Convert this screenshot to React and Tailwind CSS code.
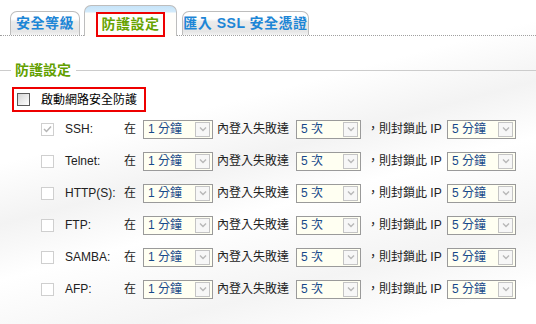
import React from "react";

const font = "font-['Liberation_Sans','Noto_Sans_CJK_TC',sans-serif]";

const services = [
  { name: "SSH:", checked: true },
  { name: "Telnet:" },
  { name: "HTTP(S):" },
  { name: "FTP:" },
  { name: "SAMBA:" },
  { name: "AFP:" },
];

const Chevron = () => (
  <svg width="8" height="6" viewBox="0 0 8 6">
    <path d="M1 1.5 L4 4.5 L7 1.5" fill="none" stroke="#b8b8b8" strokeWidth="1.4" />
  </svg>
);

const Select = ({ value, width }) => (
  <div
    className={`relative h-[19px] border border-[#9a9a9a] bg-[#fffff2] flex items-center pl-[4px] ${width}`}
  >
    <span className="text-[12px] leading-none text-[#17498a]">{value}</span>
    <div className="absolute right-[2px] top-[1px] w-[15px] h-[15px] border border-[#c4c4c4] bg-[#f7f7f7] flex items-center justify-center">
      <Chevron />
    </div>
  </div>
);

const SmallCheck = ({ checked }) => (
  <div className="w-[13px] h-[13px] border border-[#cfcfcf] bg-white flex items-center justify-center">
    {checked && (
      <svg width="9" height="8" viewBox="0 0 9 8">
        <path d="M1 4 L3.5 6.5 L8 1.5" fill="none" stroke="#b5b5b5" strokeWidth="1.5" />
      </svg>
    )}
  </div>
);

const Tab = ({ label, width }) => (
  <div
    className={`h-[24px] ${width} rounded-t-[7px] border border-b-0 border-[#bdbdbd] bg-[linear-gradient(#ffffff_0%,#ffffff_30%,#ebebeb_42%,#e6e6e6_85%,#f2f2f2_100%)] flex items-center justify-center`}
  >
    <span className="text-[14px] font-bold text-[#1d86d6] tracking-[0.5px]">{label}</span>
  </div>
);

const App = () => {
  return (
    <div
      className={`w-[536px] h-[324px] overflow-hidden bg-[linear-gradient(165deg,#ffffff_0%,#ffffff_35%,#f3f3f3_48%,#ffffff_60%,#f4f4f4_78%,#ffffff_92%)] ${font}`}
    >
      {/* tabs */}
      <div className="h-[36px] flex items-end pl-[10px] border-b border-dotted border-[#a0a0a0]">
        <Tab label="安全等級" width="w-[70px]" />
        <div className="relative ml-[4px] -mb-px h-[31px] w-[93px] rounded-t-[7px] border border-b-0 border-[#bdbdbd] bg-[linear-gradient(#c6e3f8_0px,#d3ebfb_6px,#fffefb_7px,#fffefb_100%)]">
          <div className="absolute left-[11px] top-[6px] w-[69px] h-[25px] border-2 border-[#ee0000] flex items-center justify-center">
            <span className="text-[14px] font-bold text-[#67a300] tracking-[0.5px]">防護設定</span>
          </div>
        </div>
        <div className="ml-[5px]">
          <Tab label="匯入 SSL 安全憑證" width="w-[127px]" />
        </div>
      </div>

      {/* legend */}
      <div className="mt-[26px] h-[16px] flex items-center">
        <div className="w-[11px] h-px bg-[#cccccc]" />
        <span className="ml-[4px] text-[14px] font-bold text-[#62a000] leading-none">防護設定</span>
        <div className="ml-[5px] flex-1 h-px bg-[#cccccc]" />
      </div>

      {/* enable */}
      <div className="mt-[9px] ml-[12px] w-[134px] h-[25px] border-2 border-[#ee0000] flex items-center pl-[3px]">
        <div className="w-[13px] h-[13px] border border-[#5a5a5a] bg-[linear-gradient(135deg,#d4d4d4,#ffffff)]" />
        <span className="ml-[11px] text-[12px] text-black">啟動網路安全防護</span>
      </div>

      {/* rows */}
      <div className="mt-[1px]">
        {services.map((s) => (
          <div key={s.name} className="h-[32px] flex items-center text-[12px] text-[#222]">
            <div className="ml-[41px]">
              <SmallCheck checked={s.checked} />
            </div>
            <span className="ml-[11px] w-[59px]">{s.name}</span>
            <span className="w-[19px]">在</span>
            <Select value="1 分鐘" width="w-[70px]" />
            <span className="pl-[4px] w-[83px]">內登入失敗達</span>
            <Select value="5 次" width="w-[65px]" />
            <span className="pl-[6px] w-[86px]">，則封鎖此 IP</span>
            <Select value="5 分鐘" width="w-[69px]" />
          </div>
        ))}
      </div>
    </div>
  );
};

export default App;
